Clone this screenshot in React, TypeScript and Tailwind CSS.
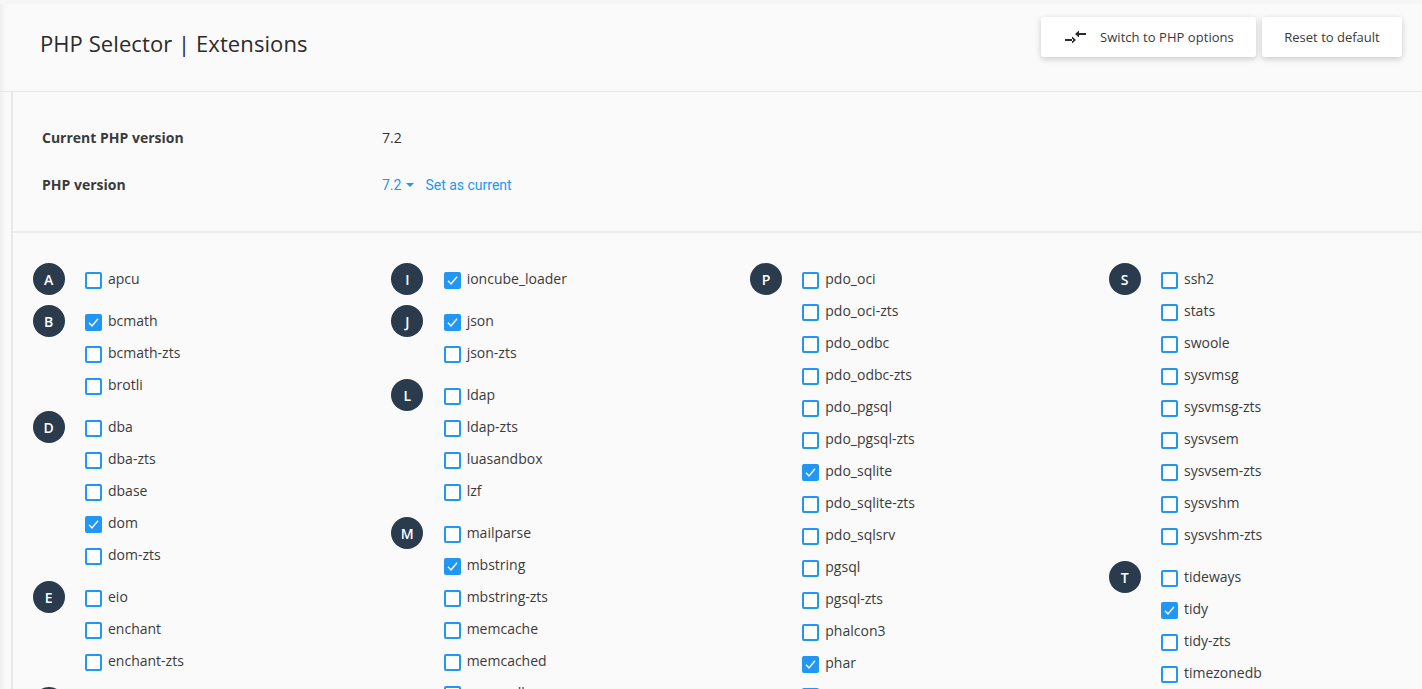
const font = "font-['Open_Sans',sans-serif]";

type Group = { letter: string; items: [string, boolean?][] };

const columns: Group[][] = [
  [
    { letter: 'A', items: [['apcu']] },
    { letter: 'B', items: [['bcmath', true], ['bcmath-zts'], ['brotli']] },
    { letter: 'D', items: [['dba'], ['dba-zts'], ['dbase'], ['dom', true], ['dom-zts']] },
    { letter: 'E', items: [['eio'], ['enchant'], ['enchant-zts']] },
    { letter: 'F', items: [['fileinfo']] },
  ],
  [
    { letter: 'I', items: [['ioncube_loader', true]] },
    { letter: 'J', items: [['json', true], ['json-zts']] },
    { letter: 'L', items: [['ldap'], ['ldap-zts'], ['luasandbox'], ['lzf']] },
    { letter: 'M', items: [['mailparse'], ['mbstring', true], ['mbstring-zts'], ['memcache'], ['memcached'], ['mongodb']] },
  ],
  [
    {
      letter: 'P',
      items: [
        ['pdo_oci'], ['pdo_oci-zts'], ['pdo_odbc'], ['pdo_odbc-zts'], ['pdo_pgsql'], ['pdo_pgsql-zts'],
        ['pdo_sqlite', true], ['pdo_sqlite-zts'], ['pdo_sqlsrv'], ['pgsql'], ['pgsql-zts'], ['phalcon3'],
        ['phar', true], ['phar-zts'],
      ],
    },
  ],
  [
    {
      letter: 'S',
      items: [['ssh2'], ['stats'], ['swoole'], ['sysvmsg'], ['sysvmsg-zts'], ['sysvsem'], ['sysvsem-zts'], ['sysvshm'], ['sysvshm-zts']],
    },
    { letter: 'T', items: [['tideways'], ['tidy', true], ['tidy-zts'], ['timezonedb']] },
  ],
];

const Checkbox = ({ checked }: { checked?: boolean }) => (
  <span
    className={`mt-[2px] flex h-[17px] w-[17px] shrink-0 items-center justify-center rounded-[2px] border-2 border-[#2196f3] ${
      checked ? 'bg-[#2196f3]' : 'bg-white'
    }`}
  >
    {checked && (
      <svg width="13" height="13" viewBox="0 0 13 13" fill="none" stroke="#fff" strokeWidth="1.4">
        <path d="M2 6.8 5 10 11 2.8" />
      </svg>
    )}
  </span>
);

const ExtensionGroup = ({ group }: { group: Group }) => (
  <div className="flex">
    <div className="flex h-8 w-8 shrink-0 items-center justify-center rounded-full bg-[#2a3b4d] text-[14px] font-semibold text-white">
      {group.letter}
    </div>
    <div className="ml-[20.33px]">
      {group.items.map(([name, checked]) => (
        <label key={name} className="flex h-8 items-center gap-[6px] text-[14px] text-[#3a3a3a]">
          <Checkbox checked={checked} />
          <span className="mb-[2px]">{name}</span>
        </label>
      ))}
    </div>
  </div>
);

export default function App() {
  return (
    <div className={`${font} h-screen overflow-hidden bg-[#fafafa] text-[#333] shadow-[inset_6px_0_5px_-3px_rgba(0,0,0,0.05)]`}>
      <div className="h-1 bg-[#f5f6f8]" />
      <header className="flex h-[88px] items-start justify-between border-b border-[#e6e6e6] pl-10 pr-5">
        <h1 className="mt-[21px] text-[22px] leading-9 tracking-[0.08px] text-[#2b2b2b]">PHP Selector | Extensions</h1>
        <div className="mt-[13px] flex gap-[6px]">
          <button className="flex h-10 w-[215px] items-center rounded-[3px] bg-white pl-6 text-[13px] text-[#3a3a3a] shadow-[0_2px_6px_rgba(0,0,0,0.2)]">
            <svg width="21" height="14" viewBox="0 0 21 14" fill="#2b2b2b" stroke="none" className="mr-[14px]">
              <path d="M13 3h8v2h-8zM10 4l4-3.4v6.8zM0 9h8v2H0zM11 10 7 6.6v6.8z" />
            </svg>
            <span className="mt-[2px] tracking-[0.05px]">Switch to PHP options</span>
          </button>
          <button className="h-10 w-[140px] rounded-[3px] bg-white pt-[2px] text-[13px] text-[#3a3a3a] shadow-[0_2px_6px_rgba(0,0,0,0.2)]">
            Reset to default
          </button>
        </div>
      </header>
      <main className="ml-[11px] border-l-2 border-[#e8e8e8]">
        <section className="h-[141px] border-b-2 border-[#ececec] pl-[29px] pt-[35px] text-[14px]">
          <div className="flex h-5 items-center">
            <span className="w-[340px] font-bold text-[#3a3a3a]">Current PHP version</span>
            <span>7.2</span>
          </div>
          <div className="mt-[27px] flex h-5 items-center">
            <span className="w-[340px] font-bold text-[#3a3a3a]">PHP version</span>
            <div className="mt-[2px] flex items-center font-['Roboto',sans-serif] text-[#2196f3]">
              <span>7.2</span>
              <span className="ml-[5px] h-0 w-0 border-x-4 border-t-4 border-x-transparent border-t-[#2196f3]" />
              <span className="ml-[11px]">Set as current</span>
            </div>
          </div>
        </section>
        <section className="grid grid-cols-[repeat(4,358.67px)] pl-[19.67px] pt-[30px]">
          {columns.map((col, i) => (
            <div key={i} className="flex flex-col gap-[10px]">
              {col.map((g) => (
                <ExtensionGroup key={g.letter} group={g} />
              ))}
            </div>
          ))}
        </section>
      </main>
    </div>
  );
}
